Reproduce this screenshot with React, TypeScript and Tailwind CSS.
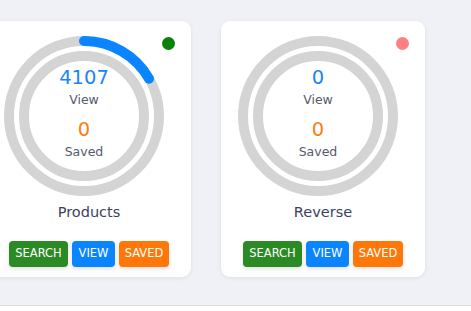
const cards = [
  { title: "Products", view: 4107, saved: 0, progress: 60, dot: "bg-[#0a820a]" },
  { title: "Reverse", view: 0, saved: 0, progress: 0, dot: "bg-[#ff8080]" },
];

function Ring({ progress }: { progress: number }) {
  const r = 75;
  const c = 2 * Math.PI * r;
  const len = (progress / 360) * c;
  return (
    <svg width="160" height="160" viewBox="0 0 160 160">
      <circle cx="80" cy="80" r="75" fill="none" stroke="#d4d4d4" strokeWidth="10" />
      <circle cx="80" cy="80" r="60" fill="none" stroke="#d4d4d4" strokeWidth="10" />
      {progress > 0 && (
        <circle
          cx="80"
          cy="80"
          r="75"
          fill="none"
          stroke="#0a84ff"
          strokeWidth="10"
          strokeLinecap="round"
          strokeDasharray={`${len} ${c}`}
          transform="rotate(-90 80 80)"
        />
      )}
    </svg>
  );
}

export default function App() {
  return (
    <div className="flex h-[311px] w-[471px] flex-col overflow-hidden bg-white font-['DejaVu_Sans',sans-serif]">
      <div className="h-[306px] border-b border-[#dcdde2] bg-[#f0f1f6]">
        <div className="ml-[-13px] flex gap-[30px] pt-[21px]">
          {cards.map((card) => (
            <div
              key={card.title}
              className="relative h-[256px] w-[204px] shrink-0 rounded-[9px] bg-white pt-[15px] shadow-[0_1px_4px_rgba(20,30,60,0.08)]"
            >
              <span className={`absolute right-[16px] top-[16px] h-[13px] w-[13px] rounded-full ${card.dot}`} />
              <div className="relative ml-[17px] h-[160px] w-[160px]">
                <Ring progress={card.progress} />
                <div className="absolute inset-0 flex flex-col items-center justify-center pb-[4px]">
                  <span className="text-[19.5px] leading-[24px] text-[#1a86f6]">{card.view}</span>
                  <span className="text-[12.5px] leading-[20px] text-[#555a6e]">View</span>
                  <span className="mt-[8px] text-[19.5px] leading-[24px] text-[#fd7e14]">{card.saved}</span>
                  <span className="text-[12.5px] leading-[20px] text-[#555a6e]">Saved</span>
                </div>
              </div>
              <p className="mt-[6px] text-center text-[14.5px] leading-[20px] text-[#3d4160]">{card.title}</p>
              <div className="mt-[19px] flex justify-center gap-[4px]">
                <button className="h-[26px] w-[59px] rounded-[4px] bg-[#2b8a24] text-[11.5px] text-white shadow-[0_2px_4px_rgba(0,0,0,0.12)]">
                  SEARCH
                </button>
                <button className="h-[26px] w-[43px] rounded-[4px] bg-[#0a84ff] text-[11.5px] text-white shadow-[0_2px_4px_rgba(0,0,0,0.12)]">
                  VIEW
                </button>
                <button className="h-[26px] w-[50px] rounded-[4px] bg-[#ff7708] text-[11.5px] text-white shadow-[0_2px_4px_rgba(0,0,0,0.12)]">
                  SAVED
                </button>
              </div>
            </div>
          ))}
        </div>
      </div>
    </div>
  );
}
